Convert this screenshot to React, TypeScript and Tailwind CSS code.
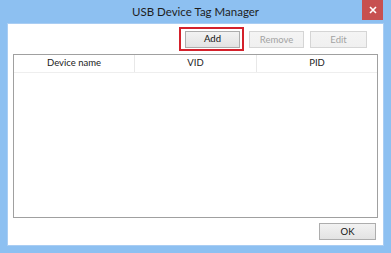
export default function App() {
  const font = { fontFamily: 'Lato, "Open Sans", sans-serif' };
  const btn =
    "flex h-[17px] items-center justify-center border border-[#adadad] bg-gradient-to-b from-[#f2f2f2] to-[#e3e3e3] text-[9.5px] leading-none";
  return (
    <div className="flex h-[253px] w-[391px] flex-col bg-[#8dc0f1]" style={font}>
      <div className="relative flex h-[23px] items-center justify-center">
        <span className="text-[11.5px] text-[#1e1e1e]">USB Device Tag Manager</span>
        <div className="absolute right-[8px] top-0 flex h-[20px] w-[21px] items-center justify-center bg-[#c75050]">
          <svg width="8" height="8" viewBox="0 0 8 8">
            <path d="M1 1 L7 7 M7 1 L1 7" stroke="#fff" strokeWidth="1.6" />
          </svg>
        </div>
      </div>
      <div className="mx-[7px] mb-[7px] flex flex-1 flex-col border border-[#a9cdf3] bg-white">
        <div className="flex items-center justify-end pr-[16px] pt-[3px]">
          <div className="flex h-[24px] w-[65px] items-center justify-end border-2 border-[#d4212b] pr-[2px]">
            <div className={`${btn} w-[55px] text-[#111]`}>Add</div>
          </div>
          <div className={`${btn} ml-[5px] mt-[1px] w-[55px] border-[#d5d5d5] from-[#f4f4f4] to-[#f0f0f0] text-[#a3a3a3]`}>
            Remove
          </div>
          <div className={`${btn} ml-[6px] mt-[1px] w-[57px] border-[#d5d5d5] from-[#f4f4f4] to-[#f0f0f0] text-[#a3a3a3]`}>
            Edit
          </div>
        </div>
        <div className="mx-[5px] mt-[3px] h-[164px] border border-[#a0a0a0] bg-white">
          <div className="grid h-[18px] grid-cols-[121px_122px_1fr] border-b border-[#eeeeee] text-[9.5px] text-[#1a1a1a]">
            <div className="flex items-center justify-center border-r border-[#e8e8e8]">Device name</div>
            <div className="flex items-center justify-center border-r border-[#e8e8e8]">VID</div>
            <div className="flex items-center justify-center">PID</div>
          </div>
        </div>
        <div className="flex justify-end pr-[7px] pt-[5px]">
          <div className={`${btn} w-[57px] text-[#111]`}>OK</div>
        </div>
      </div>
    </div>
  );
}
